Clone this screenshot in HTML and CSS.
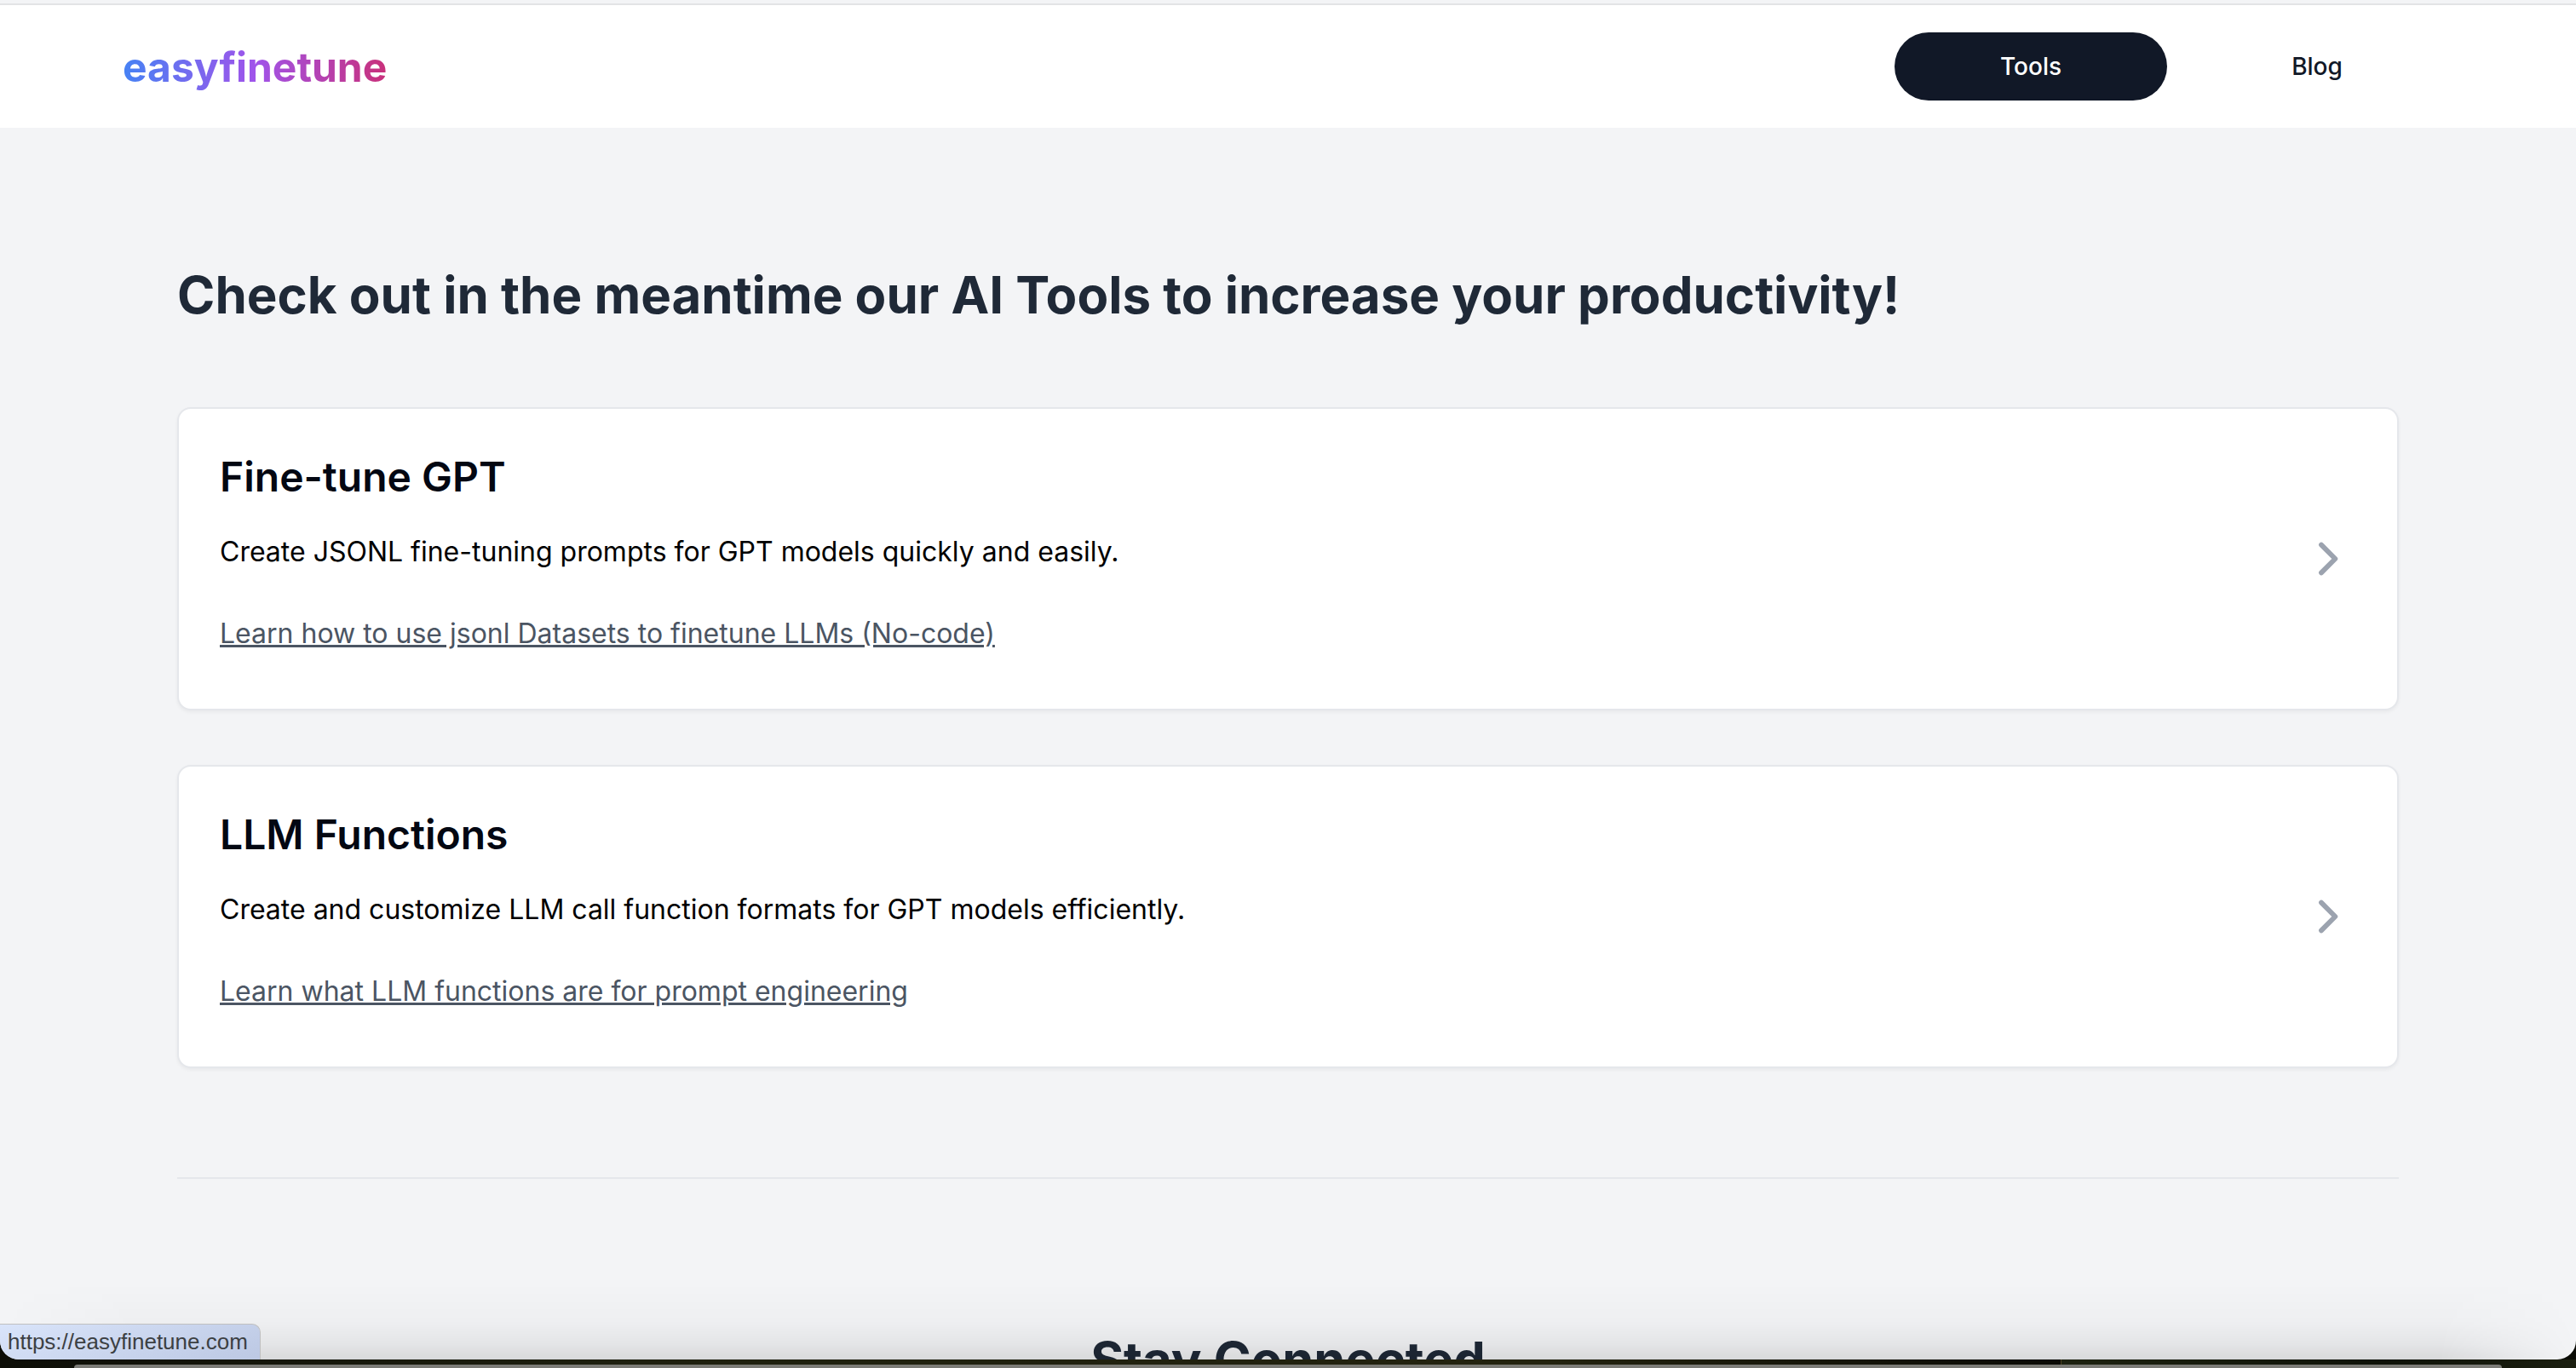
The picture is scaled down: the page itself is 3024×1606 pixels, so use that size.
FILE: index.html
```html
<!DOCTYPE html>
<html lang="en">
<head>
    <meta charset="UTF-8">
    <meta name="viewport" content="width=device-width, initial-scale=1.0">
    <title>easyfinetune</title>
    <link rel="stylesheet" href="styles.css">
</head>
<body>
    <div class="window">
        <header class="topbar">
            <a class="logo" href="#">easyfinetune</a>
            <nav class="nav">
                <a class="nav-link active" href="#">Tools</a>
                <a class="nav-link" href="#">Blog</a>
            </nav>
        </header>
        <main class="content">
            <h1>Check out in the meantime our AI Tools to increase your productivity!</h1>
            <div class="cards">
                <div class="card">
                    <div class="card-text">
                        <h2>Fine-tune GPT</h2>
                        <p>Create JSONL fine-tuning prompts for GPT models quickly and easily.</p>
                        <a class="card-link" href="#">Learn how to use jsonl Datasets to finetune LLMs (No-code)</a>
                    </div>
                    <svg class="chevron" viewBox="0 0 24 24" fill="none" stroke="currentColor" stroke-width="2.5" stroke-linecap="round" stroke-linejoin="round"><path d="M9 5l7 7-7 7"/></svg>
                </div>
                <div class="card">
                    <div class="card-text">
                        <h2>LLM Functions</h2>
                        <p>Create and customize LLM call function formats for GPT models efficiently.</p>
                        <a class="card-link" href="#">Learn what LLM functions are for prompt engineering</a>
                    </div>
                    <svg class="chevron" viewBox="0 0 24 24" fill="none" stroke="currentColor" stroke-width="2.5" stroke-linecap="round" stroke-linejoin="round"><path d="M9 5l7 7-7 7"/></svg>
                </div>
            </div>
            <hr class="divider">
            <h3 class="connected">Stay Connected</h3>
        </main>
        <div class="bottom-shade"></div>
        <div class="status-url">https://easyfinetune.com</div>
    </div>
    <div class="wallpaper">
        <div class="dock"></div>
    </div>
</body>
</html>
```

FILE: styles.css
```css
* {
    box-sizing: border-box;
}

html, body {
    height: 100%;
}

body {
    margin: 0;
    font-family: Inter, "Liberation Sans", sans-serif;
    background: #0b0c06;
    overflow: hidden;
    display: flex;
    flex-direction: column;
}

a {
    color: inherit;
}

.window {
    position: relative;
    height: 1596px;
    flex-shrink: 0;
    background: #f3f4f6;
    border-bottom-left-radius: 22px;
    border-bottom-right-radius: 22px;
    overflow: hidden;
}

.topbar {
    height: 146px;
    margin-top: 4px;
    border-top: 2px solid #e2e3e5;
    background: #fff;
    padding: 0 144px;
    display: flex;
    align-items: center;
    justify-content: space-between;
}

.logo {
    font-size: 48px;
    font-weight: 700;
    text-decoration: none;
    background: linear-gradient(to right, #4682f4, #a054ea 50%, #c9307a);
    -webkit-background-clip: text;
    background-clip: text;
    color: transparent;
}

.nav {
    display: flex;
    gap: 16px;
}

.nav-link {
    width: 320px;
    height: 80px;
    border-radius: 40px;
    display: flex;
    align-items: center;
    justify-content: center;
    font-size: 28px;
    font-weight: 500;
    color: #111827;
    text-decoration: none;
}

.nav-link.active {
    background: #111827;
    color: #fff;
}

.content {
    padding: 0 208px;
}

h1 {
    margin: 0;
    padding-top: 160px;
    font-size: 60px;
    line-height: 72px;
    font-weight: 700;
    color: #1f2937;
}

.cards {
    margin-top: 96px;
    display: flex;
    flex-direction: column;
    gap: 64px;
}

.card {
    height: 356px;
    padding: 0 54px 0 48px;
    background: #fff;
    border: 2px solid #e5e7eb;
    border-radius: 16px;
    box-shadow: 0 2px 4px rgba(0, 0, 0, 0.05);
    display: flex;
    align-items: center;
    justify-content: space-between;
}

.card-text {
    align-self: flex-start;
    padding-top: 48px;
}

.card h2 {
    margin: 0 0 32px;
    font-size: 48px;
    line-height: 64px;
    font-weight: 600;
    color: #030712;
}

.card p {
    margin: 0 0 48px;
    font-size: 32px;
    line-height: 48px;
    color: #000;
}

.card-link {
    font-size: 32px;
    line-height: 48px;
    color: #4b5563;
    text-decoration: underline;
}

.chevron {
    width: 56px;
    height: 56px;
    color: #9ca3af;
    flex-shrink: 0;
}

.divider {
    margin: 128px 0 0;
    border: 0;
    border-top: 2px solid #e5e7eb;
}

.connected {
    margin: 0;
    padding-top: 176px;
    text-align: center;
    font-size: 59.5px;
    line-height: 72px;
    font-weight: 700;
    color: #1f2937;
}

.bottom-shade {
    position: absolute;
    left: 0;
    right: 0;
    bottom: 0;
    height: 90px;
    background: linear-gradient(to bottom, rgba(0, 0, 0, 0), rgba(0, 0, 0, 0.02) 50%, rgba(0, 0, 0, 0.06) 80%, rgba(0, 0, 0, 0.11));
    -webkit-mask-image: linear-gradient(to right, transparent, #000 160px, #000 calc(100% - 160px), transparent);
    mask-image: linear-gradient(to right, transparent, #000 160px, #000 calc(100% - 160px), transparent);
}

.status-url {
    position: absolute;
    left: 0;
    bottom: 0;
    width: 306px;
    height: 42px;
    padding-left: 9px;
    display: flex;
    align-items: center;
    font-family: "Liberation Sans", sans-serif;
    font-size: 26px;
    color: #3c4043;
    background: linear-gradient(160deg, #d9e4fa, #bcc8e3);
    border-top: 1px solid #c0c0c0;
    border-right: 1px solid #c0c0c0;
    border-top-right-radius: 10px;
}

.wallpaper {
    flex: 1;
    padding: 6px 87px 0;
    background: linear-gradient(to right, #0d0e07, #1e200f 25%, #23230f 60%, #0a0a05 80%, #080806 1310px, #6f5c2c 1330px, #6a5729 1700px, #7a6535 2100px, #6d5a2c 2340px, #1d2210 2420px, #0e1208 2800px, #1b1f10);
}

.dock {
    height: 4px;
    background: #7b7b76;
    border-top-left-radius: 8px;
    border-top-right-radius: 8px;
}
```
